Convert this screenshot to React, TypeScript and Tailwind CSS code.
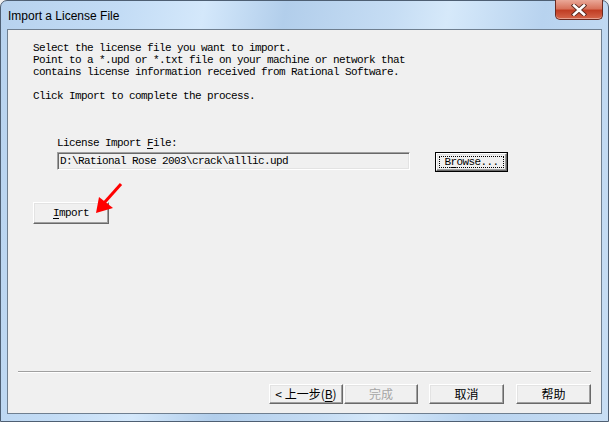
import React from 'react';

const mono = "font-['Liberation_Mono','DejaVu_Sans_Mono',monospace] text-[11px] tracking-[-0.6px]";
const cjk = "font-['Noto_Sans_CJK_SC','Noto_Sans',sans-serif] text-[12px]";

const classicBtn =
  'flex items-center justify-center bg-[#f0f0f0] border border-t-white border-l-white border-r-[#696969] border-b-[#696969] shadow-[inset_-1px_-1px_0_#a0a0a0,inset_1px_1px_0_#e3e3e3] text-black';

const App: React.FC = () => {
  return (
    <div className="w-[609px] h-[422px] overflow-hidden bg-[#f0f0f0]">
      <div className="relative w-[609px] h-[422px] flex flex-col rounded-t-[7px] border border-[#4e5f73] bg-[linear-gradient(100deg,#b7d2ee_0%,#c3dcf5_18%,#d4e8fb_30%,#b2ceeb_42%,#c6ddf4_58%,#d6e9fa_66%,#b8d3ef_80%,#c8def4_100%)]">
        {/* title bar */}
        <div className="h-[28px] flex items-center pl-[7px] pt-[1px]">
          <span className="font-['Liberation_Sans','Noto_Sans',sans-serif] text-[12px] text-black leading-none">Import a License File</span>
        </div>

        {/* close button */}
        <div className="absolute top-[-1px] right-[5px] w-[48px] h-[20px] rounded-b-[5px] border border-t-0 border-[#6b2a20] bg-[linear-gradient(180deg,#eaa898_0%,#d8735c_45%,#c13e24_55%,#d5664b_100%)] shadow-[inset_0_-1px_0_#e7a08f] flex items-center justify-center">
          <svg width="16" height="12" viewBox="0 0 16 12">
            <path d="M3 1.5 L13 10.5 M13 1.5 L3 10.5" stroke="#5a2a20" strokeWidth="4.4" strokeLinecap="square" />
            <path d="M3 1.5 L13 10.5 M13 1.5 L3 10.5" stroke="#ffffff" strokeWidth="2.6" strokeLinecap="square" />
          </svg>
        </div>

        {/* client area */}
        <div className="mx-[6px] mb-[7px] flex-1 flex flex-col border border-[#6f7f90] bg-[#f0f0f0]">
          <div className={`${mono} leading-[12px] text-black pl-[25px] pt-[12px]`}>
            <p>Select the license file you want to import.</p>
            <p>Point to a *.upd or *.txt file on your machine or network that</p>
            <p>contains license information received from Rational Software.</p>
            <p className="mt-[12px]">Click Import to complete the process.</p>
          </div>

          <div className={`${mono} leading-[12px] text-black pl-[49px] mt-[35px]`}>
            License Import <span className="underline underline-offset-2">F</span>ile:
          </div>

          <div className="flex items-start pl-[49px] mt-[3px]">
            <div className={`${mono} w-[353px] h-[18px] flex items-center pl-[2px] bg-[#f0f0f0] border border-t-[#a0a0a0] border-l-[#a0a0a0] border-r-white border-b-white shadow-[inset_1px_1px_0_#696969,inset_-1px_-1px_0_#e3e3e3] text-black`}>
              D:\Rational Rose 2003\crack\alllic.upd
            </div>
            <div className="ml-[25px] w-[73px] h-[20px] border border-black">
              <div className={`${classicBtn} ${mono} w-full h-full p-[2px]`}>
                <div className="w-full h-full flex items-center justify-center border border-dotted border-black">
                  B<span className="underline underline-offset-2">r</span>owse...
                </div>
              </div>
            </div>
          </div>

          <div className="pl-[25px] mt-[30px]">
            <div className={`${classicBtn} ${mono} w-[76px] h-[22px]`}>
              <span><span className="underline underline-offset-2">I</span>mport</span>
            </div>
          </div>

          <div className="flex-1" />

          <div className="mx-[10px] h-[2px] border-t border-t-[#a0a0a0] border-b border-b-white" />

          <div className={`${cjk} flex justify-end pr-[10px] mt-[11px] mb-[9px]`}>
            <div className={`${classicBtn} w-[74px] h-[20px]`}>
              <span>&lt;&nbsp;上一步(<span className="underline underline-offset-2">B</span>)</span>
            </div>
            <div className={`${classicBtn} w-[74px] h-[20px] ml-[1px]`}>
              <span className="text-[#a6a6a6]">完成</span>
            </div>
            <div className={`${classicBtn} w-[75px] h-[20px] ml-[11px]`}>取消</div>
            <div className={`${classicBtn} w-[75px] h-[20px] ml-[12px]`}>帮助</div>
          </div>
        </div>

        {/* red annotation arrow */}
        <svg className="absolute left-0 top-0 pointer-events-none" width="609" height="422">
          <line x1="120" y1="183" x2="103" y2="202" stroke="#ff0000" strokeWidth="3" />
          <polygon points="95,212 98,196 112,207" fill="#ff0000" />
        </svg>
      </div>
    </div>
  );
};

export default App;
